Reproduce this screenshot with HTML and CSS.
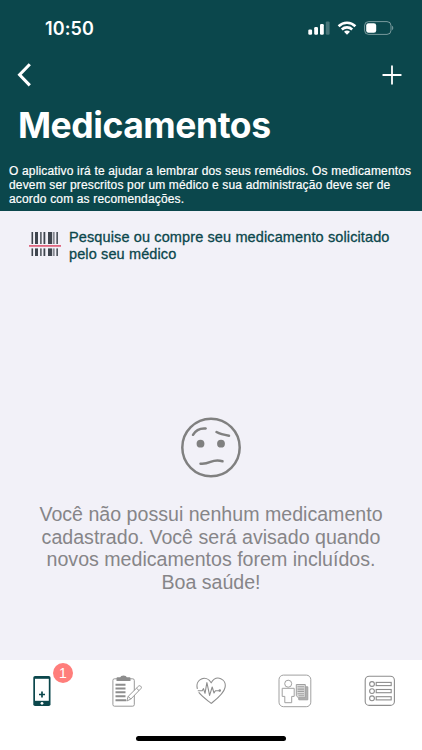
FILE: index.html
```html
<!DOCTYPE html>
<html lang="pt-BR">
<head>
  <meta charset="UTF-8" />
  <meta name="viewport" content="width=device-width, initial-scale=1" />
  <title>Medicamentos</title>
  <link rel="stylesheet" href="styles.css">
</head>
<body>

  <header class="topo">
    <div class="status">
      <span class="hora">10:50</span>
      <div class="status-icones">
        <svg class="sinal" width="22" height="14" viewBox="0 0 22 14" fill="#fff">
          <rect x="0.3" y="8.5" width="3.8" height="5.3" rx="1.2" />
          <rect x="6.2" y="6" width="3.8" height="7.8" rx="1.2" />
          <rect x="12" y="3" width="3.8" height="10.8" rx="1.2" />
          <rect x="17.8" y="0.4" width="3.8" height="13.4" rx="1.2" opacity="0.25" />
        </svg>
        <svg class="wifi" width="20" height="14" viewBox="0 0 20 14" fill="none" stroke="#fff" stroke-width="2.6">
          <path d="M1.6 5.2C6.4 0.5 13.6 0.5 18.4 5.2" />
          <path d="M4.8 8.5C7.8 5.7 12.2 5.7 15.2 8.5" />
          <path d="M10 13.7L7 10.7C8.7 9.2 11.3 9.2 13 10.7Z" fill="#fff" stroke="none" />
        </svg>
        <svg class="bateria" width="30" height="14" viewBox="0 0 30 14">
          <rect x="0.6" y="0.6" width="26.4" height="12.8" rx="4" fill="none" stroke="#fff" stroke-opacity="0.45" />
          <rect x="2.2" y="2.2" width="10" height="9.6" rx="2.3" fill="#fff" />
          <path d="M28.2 4.8C29.6 5.4 29.6 8.6 28.2 9.2Z" fill="#fff" fill-opacity="0.5" />
        </svg>
      </div>
    </div>

    <nav class="navegacao">
      <svg width="14" height="24" viewBox="0 0 14 24" fill="none" stroke="#fff" stroke-width="3.1">
        <path d="M12.8 1.2L2.6 11.8L12.8 22.4" />
      </svg>
      <svg width="20" height="20" viewBox="0 0 20 20" fill="none" stroke="#fff" stroke-width="1.8" stroke-linecap="round">
        <path d="M10 1.2V18.8M1.2 10H18.8" />
      </svg>
    </nav>

    <h1>Medicamentos</h1>
    <p class="aviso">O aplicativo irá te ajudar a lembrar dos seus remédios. Os medicamentos<br>devem ser prescritos por um médico e sua administração deve ser de<br>acordo com as recomendações.</p>
  </header>

  <main class="conteudo">
    <a class="pesquisa">
      <svg width="32" height="26" viewBox="0 0 32 26">
        <g fill="#3f454e">
          <path d="M2.5 1h1.6v24H2.5zM6 1h3v24H6zM11.2 1h1.4v24h-1.4zM14.5 1h1.8v24h-1.8zM19 1h4.2v24H19zM24.4 1h1v24h-1zM27.4 1h1.5v24h-1.5z" />
        </g>
        <rect x="0" y="13" width="32" height="4.4" fill="#f2f1f8" />
        <rect x="0" y="14" width="32" height="1.8" fill="#df6680" />
      </svg>
      <span>Pesquise ou compre seu medicamento solicitado<br>pelo seu médico</span>
    </a>

    <section class="vazio">
      <svg width="62" height="62" viewBox="0 0 62 62" fill="none" stroke="#808080" stroke-width="2.5" stroke-linecap="round">
        <circle cx="31" cy="31.5" r="28.7" />
        <path d="M13 18.8C15.5 14.5 20 12 25.7 12.5" />
        <path d="M36.5 16C40 18 44.5 19 49 19.7" />
        <path d="M20.5 47.7C31 48.7 31.5 42 42.5 45.3" />
        <circle cx="20.5" cy="27.7" r="3.9" fill="#808080" stroke="none" />
        <circle cx="41" cy="27.7" r="3.9" fill="#808080" stroke="none" />
      </svg>
      <p>Você não possui nenhum medicamento<br>cadastrado. Você será avisado quando<br>novos medicamentos forem incluídos.<br>Boa saúde!</p>
    </section>
  </main>

  <footer class="rodape">
    <nav class="abas">
      <a class="aba">
        <svg width="18" height="32" viewBox="0 0 18 32">
          <rect x="0.3" y="1" width="17.2" height="30" rx="1.8" fill="#0b474c" />
          <rect x="2" y="3.8" width="13.8" height="22" fill="#fff" />
          <path d="M9 16.5v6M6 19.5h6" stroke="#0b474c" stroke-width="1.7" />
          <circle cx="9" cy="28.3" r="1.4" fill="#fff" />
        </svg>
        <span class="contador">1</span>
      </a>
      <a class="aba">
        <svg width="30" height="32" viewBox="0 0 30 32" fill="none" stroke="#8d8d8d">
          <rect x="0.9" y="3.8" width="21.4" height="27.4" rx="1.6" stroke-width="0.9" />
          <path d="M4.5 6V3.2Q4.5 2.2 5.5 2.2H8.2Q8.6 0.6 11.5 0.6T14.8 2.2H17.5Q18.5 2.2 18.5 3.2V6Z" fill="#8d8d8d" stroke="none" />
          <path d="M3.5 9.8H13.5M3.5 13.5H13.5M3.5 17.3H13.5M3.5 21.2H13.5M3.5 25.3H14" stroke-width="1.9" />
          <path d="M14.8 26L16.2 21.4L26.7 11Q27.7 10.3 28.6 11.1L29.2 11.8Q29.8 12.7 28.9 13.6L18.8 24.1ZM16.2 21.4L18.8 24.1M24.5 13.2L27 15.6" fill="#fff" stroke-width="0.9" />
        </svg>
      </a>
      <a class="aba">
        <svg width="30" height="28" viewBox="0 0 30 28" fill="none" stroke="#8d8d8d" stroke-width="1.1" stroke-linecap="round" stroke-linejoin="round">
          <path d="M1.3 11.5C-1 2.3 10 -2.8 15.2 5.8C20.4 -3 31 2 29 10.6C27.8 16.8 20 22.5 15.2 26.4C11 23 5.7 19.3 3 15.7" />
          <path d="M2.2 13.7H6.2L7.5 11.6L9 16.3L10.9 5.5L13.6 18.4L16.2 10L18 16L19.4 13.7H23.5" />
          <circle cx="23.8" cy="13.6" r="0.7" fill="#8d8d8d" />
        </svg>
      </a>
      <a class="aba">
        <svg width="34" height="34" viewBox="0 0 34 34" fill="none" stroke="#a0a0a0" stroke-width="1">
          <rect x="1" y="1.1" width="31.8" height="31.6" rx="4.5" />
          <circle cx="10.2" cy="9.7" r="3.5" />
          <path d="M4.2 14.3H16.2V22.4H13.7V28.7H6.8V22.4H4.2Z" />
          <path d="M20.8 12.8H29.8V25.8H20.8Z" fill="#b0b0b0" />
          <path d="M18.3 10.5H27.3V23.7H20.3L18.3 21.8Z" fill="#ddd" />
          <path d="M19.5 12.8H26M19.5 15.1H26M19.5 17.4H26M19.5 19.7H26M20.5 21.8H26" stroke-width="1.1" />
        </svg>
      </a>
      <a class="aba">
        <svg width="32" height="32" viewBox="0 0 32 32" fill="none" stroke="#8d8d8d" stroke-width="1.1">
          <rect x="1.2" y="1.2" width="29.2" height="29.2" rx="4" />
          <circle cx="8" cy="9" r="2.4" /><rect x="12.2" y="7.4" width="15" height="3.2" />
          <circle cx="8" cy="16.1" r="2.4" /><rect x="12.2" y="14.5" width="15" height="3.2" />
          <circle cx="8" cy="23.3" r="2.4" /><rect x="12.2" y="21.7" width="15" height="3.2" />
        </svg>
      </a>
    </nav>
    <div class="barra-inicio"></div>
  </footer>

</body>
</html>
```
FILE: styles.css
```css
:root {
  --verde: #0b474c;
  --fundo: #f2f1f8;
  --cinza: #868588;
  --font-family: 'Liberation Sans', Arial, sans-serif;
  --font-titulo: 'Inter', sans-serif;
}

* {
  box-sizing: border-box;
}

body {
  margin: 0;
  height: 750px;
  display: flex;
  flex-direction: column;
  background-color: var(--fundo);
  font-family: var(--font-family);
  overflow: hidden;
}

svg {
  display: block;
  flex-shrink: 0;
}

.topo {
  height: 211px;
  flex-shrink: 0;
  background-color: var(--verde);
  color: #fff;
}

.status {
  height: 56px;
  padding: 0 28px 0 45px;
  display: flex;
  align-items: center;
  justify-content: space-between;
}

.hora {
  font-family: var(--font-titulo);
  font-size: 18px;
  font-weight: 600;
  letter-spacing: 0.1px;
}

.status-icones {
  display: flex;
  gap: 7px;
}

.navegacao {
  height: 37px;
  padding: 0 20px 0 17px;
  display: flex;
  align-items: center;
  justify-content: space-between;
}

h1 {
  margin: 11px 0 0 18px;
  font-family: var(--font-titulo);
  font-size: 35.5px;
  line-height: 44px;
  font-weight: 700;
  letter-spacing: -0.45px;
}

.aviso {
  margin: 16px 0 0 9px;
  font-size: 12px;
  line-height: 14px;
  letter-spacing: 0.16px;
  white-space: nowrap;
  -webkit-text-stroke: 0.2px;
}

.conteudo {
  flex: 1;
  display: flex;
  flex-direction: column;
}

.pesquisa {
  padding: 18px 0 0 29px;
  display: flex;
  gap: 8px;
  color: var(--verde);
  font-size: 14.5px;
  line-height: 16.5px;
  letter-spacing: 0.12px;
  white-space: nowrap;
  -webkit-text-stroke: 0.3px;
}

.pesquisa svg {
  margin-top: 2px;
}

.vazio {
  margin-top: 154px;
  display: flex;
  flex-direction: column;
  align-items: center;
}

.vazio p {
  margin: 25px 0 0;
  color: var(--cinza);
  font-size: 19.6px;
  line-height: 22.6px;
  text-align: center;
  white-space: nowrap;
}

.rodape {
  height: 90px;
  flex-shrink: 0;
  display: flex;
  flex-direction: column;
  align-items: center;
  background-color: #fff;
}

.abas {
  width: 100%;
  height: 61px;
  display: grid;
  grid-template-columns: repeat(5, 1fr);
}

.aba {
  position: relative;
  display: flex;
  align-items: center;
  justify-content: center;
}

.contador {
  position: absolute;
  top: 3px;
  left: 53px;
  width: 20px;
  height: 20px;
  border-radius: 50%;
  background-color: #ff7e7b;
  color: #fff;
  font-size: 14px;
  line-height: 20px;
  text-align: center;
}

.barra-inicio {
  width: 150px;
  height: 5px;
  margin-top: 15px;
  border-radius: 3px;
  background-color: #000;
}
```
